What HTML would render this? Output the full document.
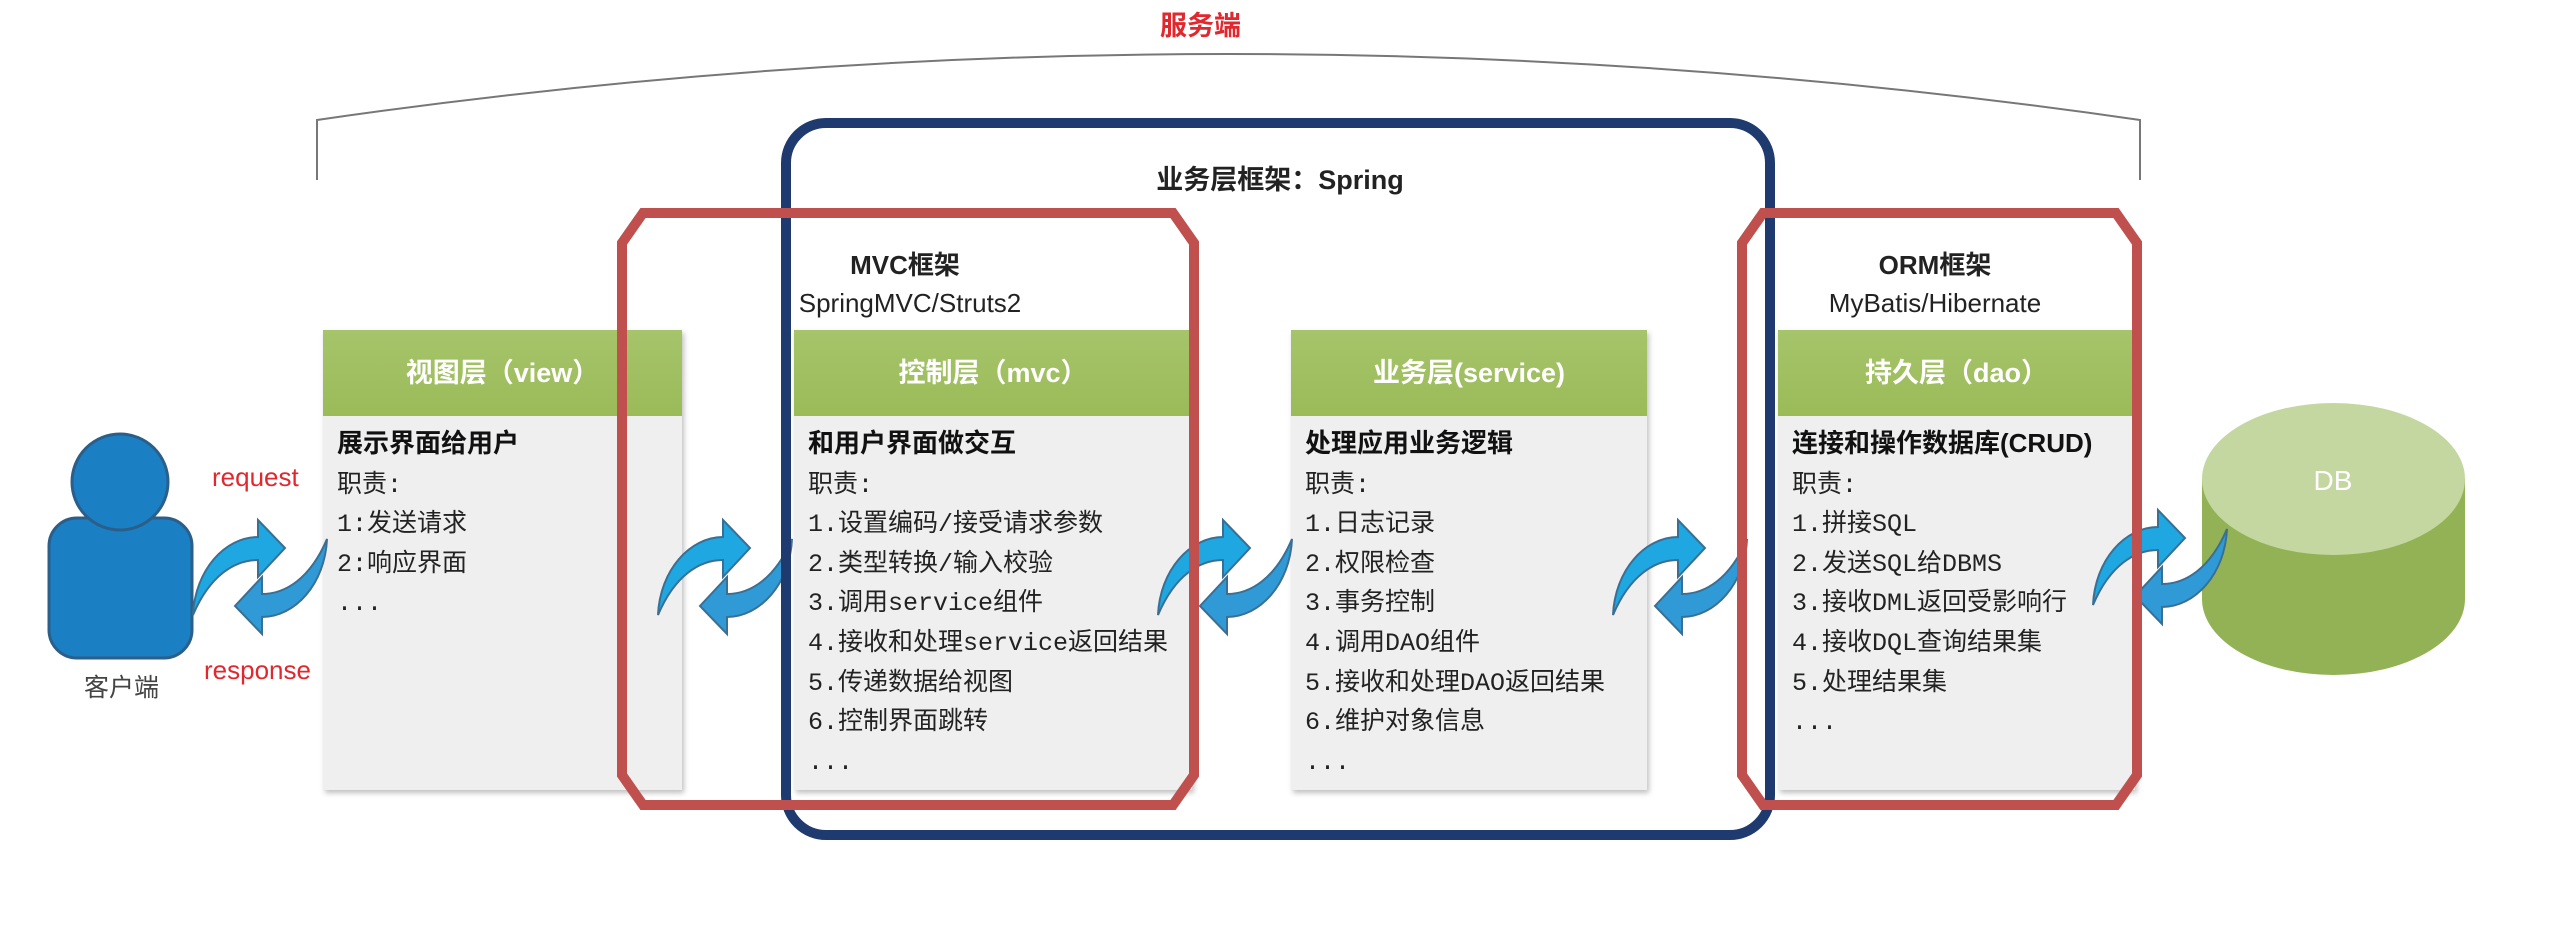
<!DOCTYPE html>
<html><head><meta charset="utf-8"><style>
*{margin:0;padding:0;box-sizing:border-box}
body{width:2572px;height:946px;background:#fff;position:relative;overflow:hidden;font-family:"Liberation Sans","Noto Sans CJK SC",sans-serif}
.a{position:absolute}
.card{position:absolute;top:330px;height:460px;background:#efefef;box-shadow:2px 3px 5px rgba(0,0,0,.25)}
.hd{height:86px;background:linear-gradient(#a6c46a,#9bbb59);color:#fff;font-weight:bold;font-size:27px;text-align:center;line-height:86px}
.bd{padding:8px 0 0 14px;font-family:"Liberation Mono","Noto Sans CJK SC",monospace;font-size:25px;line-height:39.6px;color:#222;white-space:nowrap}
.bd b{font-family:"Liberation Sans","Noto Sans CJK SC",sans-serif;font-size:26px;color:#111;display:inline-block;height:37px}
.ct{position:absolute;text-align:center;font-size:26px;color:#222;white-space:nowrap}
</style></head><body>
<div class="a" style="left:1160px;top:4px;color:#e0282e;font-weight:bold;font-size:27px">服务端</div>
<div class="ct" style="left:1130px;top:158px;width:300px;font-weight:bold;font-size:27px">业务层框架：Spring</div>
<div class="ct" style="left:800px;top:245px;width:210px;font-weight:bold">MVC框架</div>
<div class="ct" style="left:780px;top:288px;width:260px">SpringMVC/Struts2</div>
<div class="ct" style="left:1835px;top:245px;width:200px;font-weight:bold">ORM框架</div>
<div class="ct" style="left:1805px;top:288px;width:260px">MyBatis/Hibernate</div>

<div class="card" style="left:323px;width:359px"><div class="hd">视图层（view）</div><div class="bd"><b>展示界面给用户</b><br>职责:<br>1:发送请求<br>2:响应界面<br>...</div></div>
<div class="card" style="left:794px;width:398px"><div class="hd">控制层（mvc）</div><div class="bd"><b>和用户界面做交互</b><br>职责:<br>1.设置编码/接受请求参数<br>2.类型转换/输入校验<br>3.调用service组件<br>4.接收和处理service返回结果<br>5.传递数据给视图<br>6.控制界面跳转<br>...</div></div>
<div class="card" style="left:1291px;width:356px"><div class="hd">业务层(service)</div><div class="bd"><b>处理应用业务逻辑</b><br>职责:<br>1.日志记录<br>2.权限检查<br>3.事务控制<br>4.调用DAO组件<br>5.接收和处理DAO返回结果<br>6.维护对象信息<br>...</div></div>
<div class="card" style="left:1778px;width:357px"><div class="hd">持久层（dao）</div><div class="bd"><b>连接和操作数据库(CRUD)</b><br>职责:<br>1.拼接SQL<br>2.发送SQL给DBMS<br>3.接收DML返回受影响行<br>4.接收DQL查询结果集<br>5.处理结果集<br>...</div></div>

<div class="a" style="left:212px;top:462px;color:#e0282e;font-size:26px">request</div>
<div class="a" style="left:204px;top:655px;color:#e0282e;font-size:26px">response</div>
<div class="a" style="left:84px;top:668px;color:#444;font-size:25px">客户端</div>

<svg class="a" style="left:0;top:0" width="2572" height="946">
<defs>
<g id="ar">
<path d="M3,100 C5,55 35,22 68,22 L68,5 L95,33 L68,62 L68,45 C45,45 20,60 3,100 Z" fill="#1ea7e1" stroke="#3a6f93" stroke-width="2"/>
<path d="M3,100 C5,55 35,22 68,22 L68,5 L95,33 L68,62 L68,45 C45,45 20,60 3,100 Z" fill="#2f9ad6" stroke="#3a6f93" stroke-width="2" transform="rotate(180 70 62)"/>
</g>
</defs>
<path d="M317,180 L317,120 Q1228,-12 2140,120 L2140,180" fill="none" stroke="#777" stroke-width="2"/>
<rect x="49" y="518" width="143" height="140" rx="28" fill="#1a7fc3" stroke="#2b5f8a" stroke-width="3"/>
<circle cx="120" cy="482" r="48" fill="#1a7fc3" stroke="#2b5f8a" stroke-width="3"/>
<path d="M2202,479 L2202,599 A131.5,76 0 0 0 2465,599 L2465,479 Z" fill="#93b255"/>
<ellipse cx="2333.5" cy="479" rx="131.5" ry="76" fill="#c4d7a0"/>
<text x="2333" y="490" fill="#fff" font-size="28" text-anchor="middle" font-family="Liberation Sans">DB</text>
<use href="#ar" x="190" y="515"/>
<use href="#ar" x="655" y="515"/>
<use href="#ar" x="1155" y="515"/>
<use href="#ar" x="1610" y="515"/>
<use href="#ar" x="2090" y="505"/>
<rect x="786" y="123" width="984" height="712" rx="40" fill="none" stroke="#1f3a6e" stroke-width="10"/>
<path d="M643,213 L1173,213 L1194,243 L1194,775 L1173,805 L643,805 L622,775 L622,243 Z" fill="none" stroke="#c0504d" stroke-width="10"/>
<path d="M1763,213 L2116,213 L2137,243 L2137,775 L2116,805 L1763,805 L1742,775 L1742,243 Z" fill="none" stroke="#c0504d" stroke-width="10"/>
</svg>
</body></html>
